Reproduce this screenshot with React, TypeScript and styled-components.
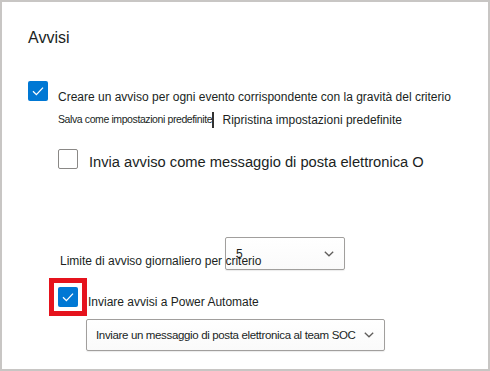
import styled, { createGlobalStyle } from "styled-components";

const GlobalStyle = createGlobalStyle`
  body {
    margin: 0;
    background: #ffffff;
    font-family: "Segoe UI", "Liberation Sans", Arial, sans-serif;
    color: #201f1e;
  }
`;

const CheckIcon = () => (
  <svg width="20" height="20" viewBox="0 0 20 20">
    <path d="M5 10.3 L8.4 13.6 L15 6.6" fill="none" stroke="#ffffff" strokeWidth="1.3" />
  </svg>
);

const Chevron = () => (
  <svg width="10" height="6" viewBox="0 0 10 6">
    <path d="M0.8 0.8 L5 4.8 L9.2 0.8" fill="none" stroke="#605e5c" strokeWidth="1.3" />
  </svg>
);

const Checkbox = ({ checked }: { checked?: boolean }) => (
  <Box $checked={checked}>{checked && <CheckIcon />}</Box>
);

type DropdownProps = {
  value: string;
  width: number;
  height: number;
  condensed?: boolean;
};

const Dropdown = ({ value, width, height, condensed }: DropdownProps) => (
  <Select $width={width} $height={height}>
    <SelectValue $condensed={condensed}>{value}</SelectValue>
    <Chevron />
  </Select>
);

const App = () => {
  return (
    <>
      <GlobalStyle />
      <Panel>
        <Title>Avvisi</Title>

        <CheckRow>
          <Checkbox checked />
          <Label>Creare un avviso per ogni evento corrispondente con la gravità del criterio</Label>
        </CheckRow>

        <DefaultsRow>
          <SaveLink>Salva come impostazioni predefinite</SaveLink>
          <Divider />
          <ResetLink>Ripristina impostazioni predefinite</ResetLink>
        </DefaultsRow>

        <EmailRow>
          <Checkbox />
          <BigLabel>Invia avviso come messaggio di posta elettronica O</BigLabel>
        </EmailRow>

        <LimitRow>
          <LimitSelect>
            <Dropdown value="5" width={120} height={33} />
          </LimitSelect>
          <LimitLabel>Limite di avviso giornaliero per criterio</LimitLabel>
        </LimitRow>

        <FlowRow>
          <Highlight>
            <Checkbox checked />
          </Highlight>
          <FlowLabel>Inviare avvisi a Power Automate</FlowLabel>
        </FlowRow>

        <FlowSelect>
          <Dropdown
            value="Inviare un messaggio di posta elettronica al team SOC"
            width={299}
            height={32}
            condensed
          />
        </FlowSelect>
      </Panel>
    </>
  );
};

export default App;

const Panel = styled.div`
  box-sizing: border-box;
  width: 490px;
  height: 371px;
  border: 2px solid #c8c6c4;
  background: #ffffff;
  padding: 24px 0 0 26px;
  display: flex;
  flex-direction: column;
  align-items: flex-start;
`;

const Title = styled.h2`
  margin: 0;
  font-size: 16px;
  font-weight: 400;
  line-height: 24px;
  color: #201f1e;
`;

const Box = styled.div<{ $checked?: boolean }>`
  box-sizing: border-box;
  flex: none;
  width: 20px;
  height: 20px;
  border-radius: 2px;
  border: ${(p) => (p.$checked ? "none" : "1px solid #8a8886")};
  background: ${(p) => (p.$checked ? "#0078d4" : "#ffffff")};
  display: flex;

  svg {
    display: block;
  }
`;

const CheckRow = styled.div`
  display: flex;
  align-items: flex-start;
  gap: 10px;
  margin-top: 31px;
`;

const Label = styled.span`
  margin-top: 6px;
  font-size: 12px;
  line-height: 20px;
  white-space: nowrap;
`;

const DefaultsRow = styled.div`
  display: flex;
  align-items: flex-start;
  margin: 5px 0 0 30px;
  height: 16px;
`;

const SaveLink = styled.span`
  width: 154px;
  margin-top: 1px;
  font-size: 10.5px;
  line-height: 13px;
  letter-spacing: -0.4px;
  white-space: nowrap;
`;

const Divider = styled.span`
  width: 1.5px;
  height: 16px;
  background: #323130;
`;

const ResetLink = styled.span`
  margin: 1px 0 0 9px;
  font-size: 12px;
  line-height: 15px;
  white-space: nowrap;
`;

const EmailRow = styled.div`
  display: flex;
  align-items: flex-start;
  gap: 11px;
  margin: 21px 0 0 30px;
`;

const BigLabel = styled.span`
  margin-top: 3px;
  font-size: 14.7px;
  line-height: 20px;
  white-space: nowrap;
`;

const LimitRow = styled.div`
  display: grid;
  margin-top: 65px;
`;

const LimitSelect = styled.div`
  grid-area: 1 / 1;
  margin-left: 197px;
`;

const LimitLabel = styled.span`
  grid-area: 1 / 1;
  align-self: start;
  margin: 16px 0 0 32px;
  font-size: 12px;
  line-height: 16px;
  white-space: nowrap;
`;

const Select = styled.div<{ $width: number; $height: number }>`
  box-sizing: border-box;
  width: ${(p) => p.$width}px;
  height: ${(p) => p.$height}px;
  border: 1px solid #a19f9d;
  border-radius: 2px;
  background: linear-gradient(#ffffff, #fafafa);
  box-shadow: 0 1px 1px rgba(0, 0, 0, 0.08);
  display: flex;
  align-items: center;
  justify-content: space-between;
  gap: 6px;
  padding: 0 10px 0 10px;

  svg {
    display: block;
    flex: none;
  }
`;

const SelectValue = styled.span<{ $condensed?: boolean }>`
  font-size: ${(p) => (p.$condensed ? "11.5px" : "12px")};
  letter-spacing: ${(p) => (p.$condensed ? "-0.35px" : "normal")};
  line-height: 16px;
  white-space: nowrap;
  color: #201f1e;
`;

const FlowRow = styled.div`
  display: flex;
  align-items: flex-start;
  gap: 1px;
  margin: 8px 0 0 21px;
`;

const Highlight = styled.div`
  box-sizing: border-box;
  width: 38px;
  height: 38px;
  border: 5px solid #e5131d;
  padding: 4px;
`;

const FlowLabel = styled.span`
  margin-top: 16px;
  font-size: 12px;
  line-height: 16px;
  white-space: nowrap;
`;

const FlowSelect = styled.div`
  margin: 3px 0 0 58px;

  & > div {
    padding-left: 9px;
  }
`;
